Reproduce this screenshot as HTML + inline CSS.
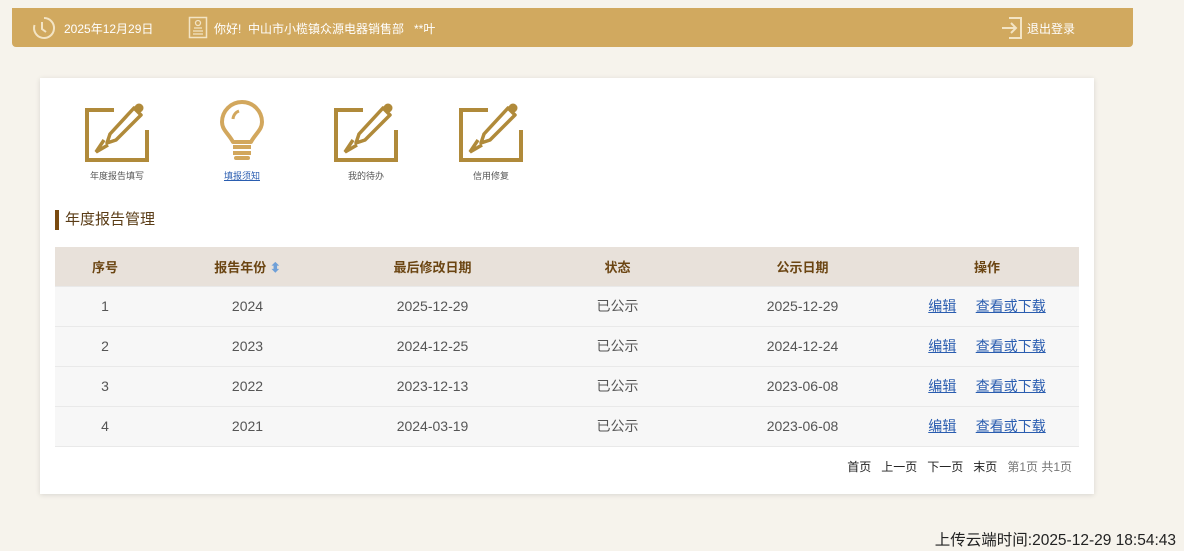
<!DOCTYPE html>
<html><head><meta charset="utf-8"><style>
*{margin:0;padding:0;box-sizing:border-box}
body{width:1184px;height:551px;background:#f6f3ec;font-family:"Liberation Sans","Noto Sans CJK SC",sans-serif;position:relative;overflow:hidden;font-size:12px}
.hdr{position:absolute;left:12px;top:8px;width:1121px;height:39px;background:#d1a95f;border-radius:0 0 4px 4px;color:#fff}
.hdr span{position:absolute;top:12px;font-size:12px}
.card{position:absolute;left:40px;top:78px;width:1054px;height:416px;background:#fff;box-shadow:0 1px 5px rgba(0,0,0,.12)}
.ic{position:absolute;text-align:center;width:100px;font-size:9px;color:#555}
.ic svg{display:block;margin:0 auto}
.title{position:absolute;left:55px;top:210px;border-left:4px solid #7a4a10;padding-left:6px;height:20px;line-height:20px;font-size:15px;color:#5a3c16}
table{position:absolute;left:55px;top:247px;width:1024px;border-collapse:collapse}
th{background:#e8e1da;height:39px;color:#6b4512;font-weight:bold;font-size:13px}
td{background:#f7f7f7;height:40px;text-align:center;color:#555;font-size:14px;border-top:1px solid #e9e9e9}
tr.last td{border-bottom:1px solid #e9e9e9}
a{color:#2a5db0;text-decoration:underline}
.pg{position:absolute;right:112px;top:458px;font-size:12px;color:#222}
.ft{position:absolute;right:8px;top:528px;font-size:15.5px;color:#222}
</style></head><body>
<div class="hdr">
<svg style="position:absolute;left:20px;top:8px" width="24" height="24" viewBox="0 0 24 24"><path d="M12 2a10 10 0 1 1-9.5 7" fill="none" stroke="#f3e4c4" stroke-width="2"/><path d="M10 6v7l4 3" fill="none" stroke="#f3e4c4" stroke-width="2"/></svg>
<span style="left:52px">2025年12月29日</span>
<svg style="position:absolute;left:176px;top:8px" width="20" height="23" viewBox="0 0 20 23"><rect x="1.5" y="1.5" width="17" height="20" fill="none" stroke="#f3e4c4" stroke-width="1.5"/><circle cx="10" cy="7" r="2.5" fill="none" stroke="#f3e4c4" stroke-width="1.3"/><path d="M5 15h10M5 18h10M6 12h8" stroke="#f3e4c4" stroke-width="1.3"/></svg>
<span style="left:202px">你好!&nbsp; 中山市小榄镇众源电器销售部&nbsp;&nbsp; **叶</span>
<svg style="position:absolute;left:989px;top:8px" width="22" height="24" viewBox="0 0 22 24"><path d="M8 2h12v20H8" fill="none" stroke="#f3e4c4" stroke-width="2"/><path d="M1 12h13M10 7l5 5-5 5" fill="none" stroke="#f3e4c4" stroke-width="2"/></svg>
<span style="left:1015px">退出登录</span>
</div>
<div class="card"></div>
<svg width="0" height="0" style="position:absolute"><defs><g id="pen"><path d="M30 10H3v50h60V30" fill="none" stroke="#b08a3a" stroke-width="4"/><path d="M50 8l7 7-25 25-9 3 3-9z" fill="none" stroke="#b08a3a" stroke-width="3.5" stroke-linejoin="round"/><path d="M20 40l-8 12 12-7" fill="none" stroke="#b08a3a" stroke-width="3.5"/><circle cx="55" cy="8" r="4.5" fill="#b08a3a"/></g></defs></svg>
<div class="ic" style="left:67px;top:100px"><svg width="66" height="64" viewBox="0 0 66 64"><use href="#pen"/></svg><div style="margin-top:5px">年度报告填写</div></div>
<div class="ic" style="left:192px;top:100px"><svg width="46" height="64" viewBox="0 0 46 64"><path d="M14 42C10 34 3 30 3 22a20 20 0 0 1 40 0c0 8-7 12-11 20z" fill="none" stroke="#d2a75d" stroke-width="4" stroke-linejoin="round"/><path d="M14 19a9 9 0 0 1 6-8" fill="none" stroke="#d2a75d" stroke-width="3"/><path d="M14 47h18M14 53h18" stroke="#d2a75d" stroke-width="4"/><path d="M17 58h12" stroke="#d2a75d" stroke-width="4" stroke-linecap="round"/></svg><div style="margin-top:5px"><a>填报须知</a></div></div>
<div class="ic" style="left:316px;top:100px"><svg width="66" height="64" viewBox="0 0 66 64"><use href="#pen"/></svg><div style="margin-top:5px">我的待办</div></div>
<div class="ic" style="left:441px;top:100px"><svg width="66" height="64" viewBox="0 0 66 64"><use href="#pen"/></svg><div style="margin-top:5px">信用修复</div></div>
<div class="title">年度报告管理</div>
<table>
<tr><th style="width:100px">序号</th><th style="width:185px">报告年份 <span style="color:#6fa0d8;font-size:13px">⬍</span></th><th style="width:185px">最后修改日期</th><th style="width:185px">状态</th><th style="width:185px">公示日期</th><th>操作</th></tr>
<tr><td>1</td><td>2024</td><td>2025-12-29</td><td>已公示</td><td>2025-12-29</td><td><a>编辑</a>&nbsp;&nbsp;&nbsp;&nbsp; <a>查看或下载</a></td></tr>
<tr><td>2</td><td>2023</td><td>2024-12-25</td><td>已公示</td><td>2024-12-24</td><td><a>编辑</a>&nbsp;&nbsp;&nbsp;&nbsp; <a>查看或下载</a></td></tr>
<tr><td>3</td><td>2022</td><td>2023-12-13</td><td>已公示</td><td>2023-06-08</td><td><a>编辑</a>&nbsp;&nbsp;&nbsp;&nbsp; <a>查看或下载</a></td></tr>
<tr class="last"><td>4</td><td>2021</td><td>2024-03-19</td><td>已公示</td><td>2023-06-08</td><td><a>编辑</a>&nbsp;&nbsp;&nbsp;&nbsp; <a>查看或下载</a></td></tr>
</table>
<div class="pg">首页&nbsp;&nbsp; 上一页&nbsp;&nbsp; 下一页&nbsp;&nbsp; 末页&nbsp;&nbsp; <span style="color:#777">第1页 共1页</span></div>
<div class="ft">上传云端时间:2025-12-29 18:54:43</div>
</body></html>
